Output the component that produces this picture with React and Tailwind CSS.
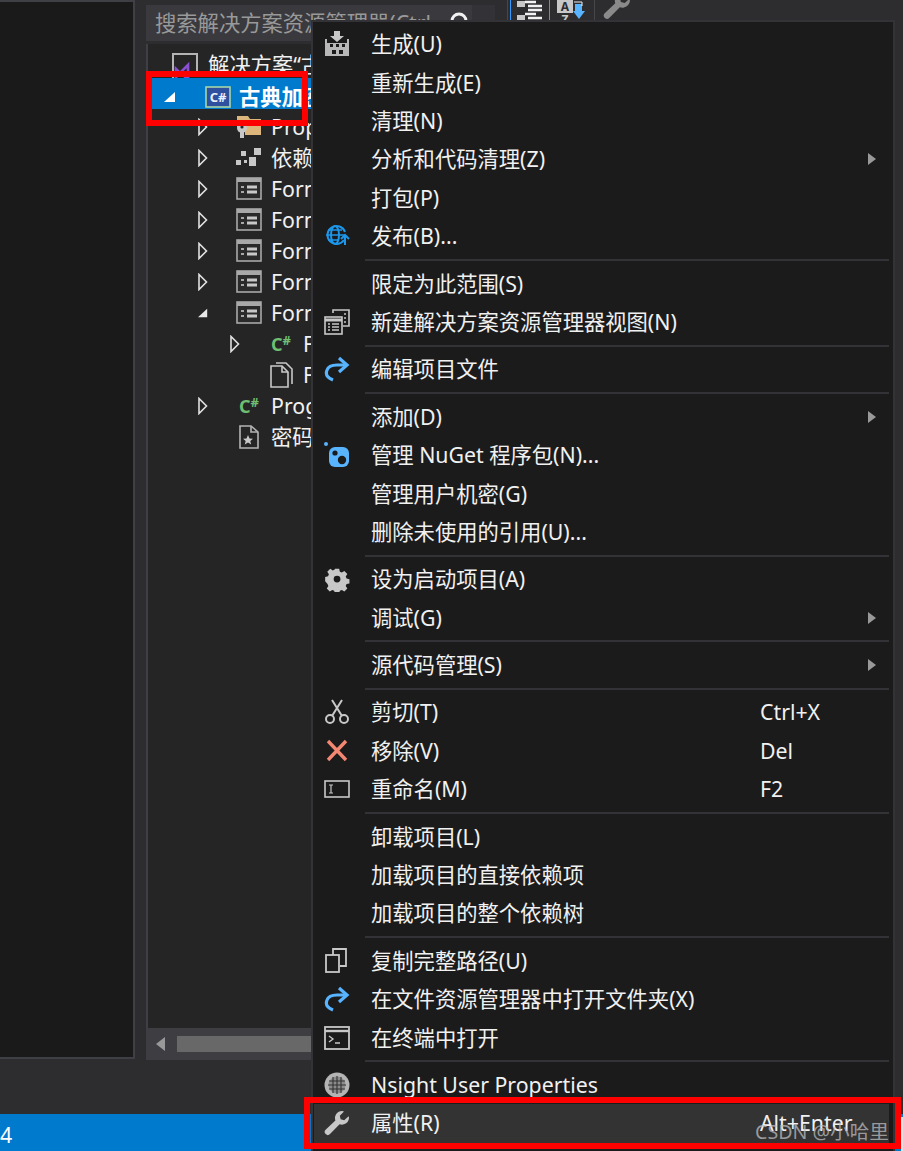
import React from 'react';

const cjk = { fontFamily: '"Noto Sans", "Noto Sans CJK SC", sans-serif' };

function BuildIcon() {
  return (
    <svg width="26" height="26" viewBox="0 0 26 26">
      <path d="M10 0h6v5h4l-7 6-7-6h4z" fill="#c8c8c8" />
      <path d="M1 8h2v4h20V8h2v17H1z" fill="#b8b8b8" />
      <rect x="6" y="13" width="3" height="3" fill="#1b1b1c" />
      <rect x="12" y="13" width="3" height="3" fill="#1b1b1c" />
      <rect x="18" y="13" width="3" height="3" fill="#1b1b1c" />
      <rect x="8" y="19" width="4" height="4" fill="#1b1b1c" />
      <rect x="15" y="19" width="4" height="4" fill="#1b1b1c" />
    </svg>
  );
}

function GlobeIcon() {
  return (
    <svg width="26" height="26" viewBox="0 0 26 26" fill="none" stroke="#1c97ea" strokeWidth="2">
      <path d="M20 17a9 9 0 1 1 1-8" />
      <ellipse cx="11" cy="12" rx="4" ry="9" />
      <path d="M2 12h18M4 7h14M4 17h11" strokeWidth="1.6" />
      <path d="M21 22v-9M17 16l4-4 4 4" strokeWidth="2" />
    </svg>
  );
}

function ViewsIcon() {
  return (
    <svg width="26" height="26" viewBox="0 0 26 26" fill="none" stroke="#c8c8c8" strokeWidth="1.6">
      <path d="M9 4V1h16v16h-6" />
      <path d="M20 5h2M20 9h2M20 13h2" />
      <rect x="1" y="8" width="17" height="17" fill="#1b1b1c" />
      <path d="M1 11h17" strokeWidth="3" />
      <path d="M4 15h2M8 15h7M4 18h2M8 18h7M4 21h2M8 21h7" />
    </svg>
  );
}

function RedoIcon() {
  return (
    <svg width="26" height="26" viewBox="0 0 26 26" fill="none" stroke="#59b4ff" strokeWidth="3.2">
      <path d="M9 24c-5-2-8-5-6-10 1-3 5-5 10-5h9" />
      <path d="M15 2l8 7-8 7" />
    </svg>
  );
}

function NugetIcon() {
  return (
    <svg width="26" height="26" viewBox="0 0 26 26">
      <circle cx="2" cy="2" r="2" fill="#59b4ff" />
      <rect x="5" y="5" width="20" height="20" rx="6" fill="#59b4ff" />
      <circle cx="11" cy="11" r="2.6" fill="#1b1b1c" />
      <circle cx="18" cy="18" r="4.2" fill="#1b1b1c" />
    </svg>
  );
}

function GearIcon() {
  return (
    <svg width="26" height="26" viewBox="0 0 26 26">
      <path
        fill="#c8c8c8"
        fillRule="evenodd"
        d="M10.5 1h5l.8 3.4 2.3 1 3-1.9 3.5 3.5-1.9 3 1 2.3 3.4.8v5l-3.4.8-1 2.3 1.9 3-3.5 3.5-3-1.9-2.3 1-.8 3.4h-5l-.8-3.4-2.3-1-3 1.9-3.5-3.5 1.9-3-1-2.3L-1 15.5v-5l3.4-.8 1-2.3-1.9-3 3.5-3.5 3 1.9 2.3-1zM13 9a4 4 0 1 0 0 8 4 4 0 0 0 0-8z"
        transform="translate(2 2) scale(.85)"
      />
    </svg>
  );
}

function ScissorsIcon() {
  return (
    <svg width="26" height="26" viewBox="0 0 26 26" fill="none" stroke="#c8c8c8" strokeWidth="2">
      <circle cx="6" cy="20" r="4" />
      <circle cx="20" cy="20" r="4" />
      <path d="M8 17L18 1M18 17L8 1" />
    </svg>
  );
}

function CloseIcon() {
  return (
    <svg width="26" height="26" viewBox="0 0 26 26" fill="none" stroke="#f48771" strokeWidth="3.4">
      <path d="M4 3l18 19M22 3L4 22" />
    </svg>
  );
}

function RenameIcon() {
  return (
    <svg width="26" height="20" viewBox="0 0 26 20" fill="none" stroke="#c8c8c8">
      <rect x="1" y="2" width="24" height="16" strokeWidth="1.6" />
      <path d="M5 6h4M5 14h4M7 6v8" strokeWidth="1.2" />
    </svg>
  );
}

function CopyIcon() {
  return (
    <svg width="26" height="26" viewBox="0 0 26 26" fill="none" stroke="#c8c8c8" strokeWidth="1.8">
      <path d="M9 7V1h13v17h-6" />
      <rect x="2" y="7" width="13" height="17" />
    </svg>
  );
}

function TerminalIcon() {
  return (
    <svg width="26" height="24" viewBox="0 0 26 24" fill="none" stroke="#c8c8c8" strokeWidth="1.8">
      <rect x="1" y="1" width="24" height="22" />
      <path d="M1 5h24" strokeWidth="2.4" />
      <path d="M5 10l4 3-4 3M11 17h5" strokeWidth="1.4" />
    </svg>
  );
}

function NsightIcon() {
  return (
    <svg width="26" height="26" viewBox="0 0 26 26">
      <circle cx="13" cy="13" r="12.5" fill="#b4b4b4" />
      <circle cx="13" cy="13" r="8.5" fill="#8c8c8c" />
      <g stroke="#333" strokeWidth="1.1">
        <path d="M9 5v16M13 4v18M17 5v16M5 9h16M4 13h18M5 17h16" />
      </g>
    </svg>
  );
}

function WrenchIcon({ color = '#c8c8c8', size = 26 }) {
  return (
    <svg width={size} height={size} viewBox="0 0 26 26">
      <path
        fill={color}
        d="M18 1a7 7 0 0 0-6.6 9.4L1.6 19.8a3 3 0 0 0 4.4 4.2l9.6-9.8A7 7 0 0 0 25 7.5l-.4-1.3-4.4 4-3.6-1 -.8-3.4 4.2-4.2A7 7 0 0 0 18 1z"
      />
    </svg>
  );
}

function CsFileIcon() {
  return (
    <span className="text-[#6fbf73] font-bold leading-none flex items-start" style={cjk}>
      <span className="text-[18px]">C</span>
      <span className="text-[13px] -mt-[1px]">#</span>
    </span>
  );
}

function FormIcon() {
  return (
    <svg width="26" height="23" viewBox="0 0 26 23" fill="none">
      <rect x="1" y="1" width="24" height="21" stroke="#a8a8a8" strokeWidth="1.6" fill="#2a2a2a" />
      <rect x="1" y="1" width="24" height="4" fill="#a8a8a8" />
      <path d="M5 10h3M5 15h3" stroke="#a8a8a8" strokeWidth="2" />
      <path d="M11 10h10M11 15h10" stroke="#c8c8c8" strokeWidth="3" />
    </svg>
  );
}

function Arrow({ open, light }) {
  if (open) {
    return (
      <svg width="12" height="12" viewBox="0 0 12 12">
        <path d="M11 1v10H0z" fill={light ? '#fff' : '#e8e8e8'} />
      </svg>
    );
  }
  return (
    <svg width="10" height="18" viewBox="0 0 10 18" fill="none">
      <path d="M1 1.5v15L8.5 9z" stroke="#e0e0e0" strokeWidth="1.6" />
    </svg>
  );
}

function PropsIcon() {
  return (
    <svg width="26" height="24" viewBox="0 0 26 24">
      <path d="M1 1h11l2 3h11v16H9V12H1z" fill="#dcb67a" />
      <circle cx="6" cy="13" r="5" fill="#c8c8c8" />
      <rect x="4" y="14" width="4" height="9" fill="#c8c8c8" />
      <circle cx="6" cy="12" r="1.6" fill="#252526" />
    </svg>
  );
}

function DepsIcon() {
  return (
    <svg width="26" height="20" viewBox="0 0 26 20" fill="#c8c8c8">
      <rect x="5" y="3" width="5" height="5" />
      <rect x="0" y="12" width="5" height="5" />
      <rect x="18" y="0" width="7" height="7" />
      <rect x="13" y="9" width="7" height="9" />
      <rect x="8" y="12" width="3" height="3" />
    </svg>
  );
}

function ResxIcon() {
  return (
    <svg width="20" height="26" viewBox="0 0 20 26" fill="none" stroke="#b4b4b4" strokeWidth="1.6">
      <path d="M1 2h11l7 6v16H1z" />
      <path d="M12 2v6h7" />
      <path d="M9 11l1.5 3.4 3.5.3-2.7 2.3.9 3.5-3.2-1.9-3.2 1.9.9-3.5L4 14.7l3.5-.3z" fill="#c8c8c8" stroke="none" />
    </svg>
  );
}

function FileStackIcon() {
  return (
    <svg width="24" height="26" viewBox="0 0 24 26" fill="none" stroke="#c8c8c8" strokeWidth="1.6">
      <path d="M7 1h10l6 6v15" />
      <path d="M2 4h11l6 6v15H2z" fill="#252526" />
      <path d="M13 4v6h6" />
    </svg>
  );
}

const treeRows = [
  { arrow: 1, icon: <PropsIcon />, text: 'Properties' },
  { arrow: 1, icon: <DepsIcon />, text: '依赖项' },
  { arrow: 1, icon: <FormIcon />, text: 'Form1.cs' },
  { arrow: 1, icon: <FormIcon />, text: 'Form2.cs' },
  { arrow: 1, icon: <FormIcon />, text: 'Form3.cs' },
  { arrow: 1, icon: <FormIcon />, text: 'Form4.cs' },
  { arrow: 2, icon: <FormIcon />, text: 'Form5.cs' },
  { arrow: 1, nested: true, icon: <CsFileIcon />, text: 'Form5.Designer.cs' },
  { arrow: 0, nested: true, icon: <FileStackIcon />, text: 'Form5.resx' },
  { arrow: 1, icon: <CsFileIcon />, text: 'Program.cs' },
  { arrow: 0, icon: <ResxIcon />, text: '密码表.txt' },
];

function TreeRow({ row }) {
  return (
    <div className={`h-[31px] flex items-center text-[#f1f1f1] text-[21.3px] whitespace-nowrap ${row.nested ? 'pl-[82px]' : 'pl-[50px]'}`}>
      <span className="w-[10px] flex items-center shrink-0">
        {row.arrow === 1 && <Arrow />}
        {row.arrow === 2 && <Arrow open />}
      </span>
      <span className="ml-[20px] w-[42px] flex justify-center shrink-0">{row.icon}</span>
      <span className="ml-[1px]">{row.text}</span>
    </div>
  );
}

const menu = [
  [
    { icon: <BuildIcon />, label: '生成(U)' },
    { label: '重新生成(E)' },
    { label: '清理(N)' },
    { label: '分析和代码清理(Z)', sub: true },
    { label: '打包(P)' },
    { icon: <GlobeIcon />, label: '发布(B)...' },
  ],
  [{ label: '限定为此范围(S)' }, { icon: <ViewsIcon />, label: '新建解决方案资源管理器视图(N)' }],
  [{ icon: <RedoIcon />, label: '编辑项目文件' }],
  [
    { label: '添加(D)', sub: true },
    { icon: <NugetIcon />, label: '管理 NuGet 程序包(N)...' },
    { label: '管理用户机密(G)' },
    { label: '删除未使用的引用(U)...' },
  ],
  [{ icon: <GearIcon />, label: '设为启动项目(A)' }, { label: '调试(G)', sub: true }],
  [{ label: '源代码管理(S)', sub: true }],
  [
    { icon: <ScissorsIcon />, label: '剪切(T)', key: 'Ctrl+X' },
    { icon: <CloseIcon />, label: '移除(V)', key: 'Del' },
    { icon: <RenameIcon />, label: '重命名(M)', key: 'F2' },
  ],
  [{ label: '卸载项目(L)' }, { label: '加载项目的直接依赖项' }, { label: '加载项目的整个依赖树' }],
  [
    { icon: <CopyIcon />, label: '复制完整路径(U)' },
    { icon: <RedoIcon />, label: '在文件资源管理器中打开文件夹(X)' },
    { icon: <TerminalIcon />, label: '在终端中打开' },
  ],
  [
    { icon: <NsightIcon />, label: 'Nsight User Properties' },
    { icon: <WrenchIcon />, label: '属性(R)', key: 'Alt+Enter', active: true },
  ],
];

function MenuRow({ item }) {
  return (
    <div className={`h-[38.4px] flex items-center relative text-[#f1f1f1] text-[21.3px] whitespace-nowrap ${item.active ? 'bg-[#333334]' : ''}`}>
      <span className="w-[57px] pl-[10px] shrink-0 flex items-center">{item.icon}</span>
      <span>{item.label}</span>
      {item.key && <span className="absolute left-[446px]">{item.key}</span>}
      {item.sub && (
        <svg className="absolute left-[554px]" width="8" height="12" viewBox="0 0 8 12">
          <path d="M0 0l8 6-8 6z" fill="#999" />
        </svg>
      )}
    </div>
  );
}

function ContextMenu() {
  return (
    <div className="absolute left-[311px] top-[20px] w-[584px] h-[1131px] bg-[#1b1b1c] border-l-2 border-t-2 border-r-2 border-[#333337] pt-[3px] pl-[1px] pr-[4px]">
      {menu.map((group, i) => (
        <div key={i}>
          {i > 0 && <div className="ml-[51px] h-[2px] my-[3.5px] bg-[#333337]" />}
          {group.map((item) => (
            <MenuRow key={item.label} item={item} />
          ))}
        </div>
      ))}
    </div>
  );
}

export default function App() {
  return (
    <div className="relative w-[903px] h-[1151px] overflow-hidden bg-[#2d2d30] flex flex-col" style={cjk}>
      <div className="flex h-[1114px] shrink-0 items-start">
        {/* output panel on the left */}
        <div className="w-[135px] h-[1059px] bg-[#1a1a1a] border-r-2 border-b-2 border-t-2 border-[#3f3f46]" />

        {/* solution explorer */}
        <div className="ml-[11px] w-[349px] h-[1060px] flex flex-col">
          <div className="mt-[5px] h-[36px] bg-[#333337] flex">
            <div className="w-[326px] bg-[#3a3a3e] flex items-center pl-[9px] text-[#999999] text-[21.3px] whitespace-nowrap relative">
              <span className="w-[278px] overflow-hidden">搜索解决方案资源管理器(Ctrl+;)</span>
              <svg className="absolute left-[302px] top-[6px]" width="22" height="22" viewBox="0 0 22 22" fill="none" stroke="#f1f1f1" strokeWidth="3">
                <circle cx="11" cy="10" r="7" />
                <path d="M7 16l-5 5" />
              </svg>
            </div>
          </div>
          <div className="mt-[3px] flex-1 bg-[#252526] pt-[5px] border-l-2 border-[#3f3f46] overflow-hidden">
            <div className="h-[31px] flex items-start pt-[4px] text-[#f1f1f1] text-[21.3px] leading-[24px] whitespace-nowrap pl-[24px]">
              <svg className="shrink-0" width="26" height="30" viewBox="0 0 26 30" fill="none">
                <path d="M1 30V1h24v22" stroke="#b4b4b4" strokeWidth="2" />
                <path d="M4 16l4 4 8-8v14l-8-6-4 4z" stroke="#8a4fd3" strokeWidth="2.6" />
              </svg>
              <span className="ml-[10px]">解决方案“古典加密”</span>
            </div>
            <div className="relative -mt-[2px] h-[31px] bg-[#007acc] flex items-center pt-[6px] text-white font-bold text-[21.3px] whitespace-nowrap">
              <span className="ml-[16px] w-[12px] flex"><Arrow open light /></span>
              <span className="ml-[29px] flex">
                <svg width="26" height="22" viewBox="0 0 26 22">
                  <rect x="1" y="1" width="24" height="20" fill="#2f4f9f" stroke="#a5d6a7" strokeWidth="1.6" />
                  <text x="13" y="16" textAnchor="middle" fontSize="13" fontWeight="700" fill="#e8f0ff" fontFamily="Noto Sans">C#</text>
                </svg>
              </span>
              <span className="ml-[8px]">古典加密</span>
            </div>
            <div className="mt-[2px]">
              {treeRows.map((row) => (
                <TreeRow key={row.text} row={row} />
              ))}
            </div>
          </div>
          <div className="h-[32px] bg-[#3e3e42] flex items-center pl-[10px] shrink-0">
            <svg width="10" height="14" viewBox="0 0 10 14"><path d="M9 0v14L0 7z" fill="#999" /></svg>
            <div className="ml-[11px] h-[16px] flex-1 bg-[#686868]" />
          </div>
        </div>

        {/* properties toolbar, only the top edge shows above the menu */}
        <div className="flex-1 flex items-start h-[20px] overflow-hidden pl-[12px]">
          <div className="w-px h-[20px] bg-[#47474b]" />
          <div className="ml-[2px] w-[40px] h-[20px] border-x border-[#3399ff] flex justify-center">
            <svg width="28" height="20" viewBox="0 0 28 20">
              <rect x="1" y="1" width="8" height="6" fill="#c8c8c8" />
              <rect x="1" y="15" width="8" height="8" fill="#c8c8c8" />
              <path d="M9 2h11M12 6h14M12 10h14M9 14h11M12 18h14" stroke="#f1f1f1" strokeWidth="2.6" />
            </svg>
          </div>
          <svg className="ml-[6px] shrink-0" width="30" height="20" viewBox="0 0 30 20">
            <rect x="1" y="0" width="16" height="13" fill="#c8c8c8" />
            <text x="9" y="11" textAnchor="middle" fontSize="12" fontWeight="700" fill="#2d2d30" fontFamily="Noto Sans">A</text>
            <text x="9" y="24" textAnchor="middle" fontSize="12" fontWeight="700" fill="#c8c8c8" fontFamily="Noto Sans">Z</text>
            <path d="M19 4h7v7h3l-6 8-6-8h2z" fill="#59b4ff" />
            <path d="M18 2h8v4" stroke="#f1f1f1" strokeWidth="1" fill="none" />
          </svg>
          <div className="ml-[8px] w-px h-[20px] bg-[#47474b]" />
          <span className="ml-[8px] -mt-[8px] shrink-0">
            <WrenchIcon color="#8a8a8a" size={28} />
          </span>
        </div>
      </div>

      {/* status bar */}
      <div className="h-[37px] bg-[#007acc] text-white text-[21.3px] flex items-center pt-[4px]">4</div>

      <ContextMenu />

      {/* red annotation boxes */}
      <div className="absolute left-[146px] top-[71px] w-[162px] h-[55px] border-[6px] border-[#ff0000]" />
      <div className="absolute left-[304px] top-[1097px] w-[597px] h-[52px] border-[6px] border-[#ff0000]" />
      <div className="absolute left-[901px] top-[1117px] w-[2px] h-[34px] bg-[#e4e4e4]" />

      {/* watermark */}
      <div className="absolute left-[755px] top-[1117px] text-[19.6px] text-[#bdbdbd]/75 whitespace-nowrap">CSDN @小哈里</div>
    </div>
  );
}
